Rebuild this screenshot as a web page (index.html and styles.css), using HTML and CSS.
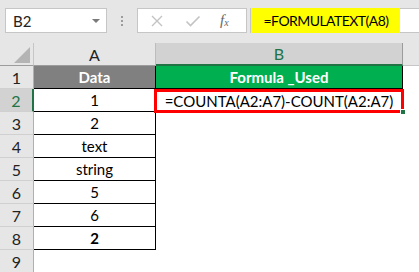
FILE: index.html
```html
<!DOCTYPE html>
<html>
<head>
<meta charset="utf-8">
<link rel="stylesheet" href="styles.css">
</head>
<body>
<div class="toolbar">
  <div class="namebox">
    <span class="name">B2</span>
    <svg class="dd" width="8" height="5" viewBox="0 0 8 5"><path d="M0 0H8L4 4Z" fill="#7a7a7a"/></svg>
  </div>
  <div class="dots"><i></i><i></i><i></i></div>
  <div class="fxbox">
    <svg class="ico" width="14" height="14" viewBox="0 0 14 14"><path d="M2 2L12 12M12 2L2 12" stroke="#c3c3c3" stroke-width="1.4" fill="none"/></svg>
    <svg class="ico" width="16" height="14" viewBox="0 0 16 14"><path d="M1.5 7.5L5.5 11.5L14.5 2.5" stroke="#c3c3c3" stroke-width="1.6" fill="none"/></svg>
    <span class="fx">f<sub>x</sub></span>
  </div>
  <div class="input"><span class="hl">=FORMULATEXT(A8)</span></div>
</div>
<div class="grid">
  <div class="corner"><svg width="16" height="16" viewBox="0 0 16 16"><path d="M16 0V16H0Z" fill="#b4b4b4"/></svg></div>
  <div class="ch">A</div>
  <div class="ch sel">B</div>
  <div class="ch rest"></div>

  <div class="rh">1</div>
  <div class="c a head-gray">Data</div>
  <div class="c b head-green">Formula _Used</div>
  <div class="c rest"></div>

  <div class="rh rsel">2</div>
  <div class="c a">1</div>
  <div class="c b active"><span>=COUNTA(A2:A7)-COUNT(A2:A7)</span><i class="sel-box"></i><i class="handle"></i></div>
  <div class="c rest"></div>

  <div class="rh">3</div>
  <div class="c a">2</div>
  <div class="c e"></div>
  <div class="c rest"></div>

  <div class="rh">4</div>
  <div class="c a">text</div>
  <div class="c e"></div>
  <div class="c rest"></div>

  <div class="rh">5</div>
  <div class="c a">string</div>
  <div class="c e"></div>
  <div class="c rest"></div>

  <div class="rh">6</div>
  <div class="c a">5</div>
  <div class="c e"></div>
  <div class="c rest"></div>

  <div class="rh">7</div>
  <div class="c a">6</div>
  <div class="c e"></div>
  <div class="c rest"></div>

  <div class="rh">8</div>
  <div class="c a bold">2</div>
  <div class="c e"></div>
  <div class="c rest"></div>

  <div class="rh">9</div>
  <div class="c e"></div>
  <div class="c e"></div>
  <div class="c rest"></div>
</div>
</body>
</html>
```
FILE: styles.css
```css
html, body {
  margin: 0;
  padding: 0;
  background: #ffffff;
  overflow: hidden;
}
body {
  width: 419px;
  height: 272px;
  font-family: Lato, "Open Sans", "Liberation Sans", sans-serif;
  color: #000;
}
.toolbar {
  height: 43px;
  background: #e6e6e6;
  display: flex;
  align-items: flex-start;
  padding-top: 8px;
  box-sizing: border-box;
}
.namebox {
  margin-left: 5px;
  width: 102px;
  height: 25px;
  box-sizing: border-box;
  background: #fff;
  border: 1px solid #c6c6c6;
  display: flex;
  align-items: center;
  justify-content: space-between;
  padding: 0 6px 0 7px;
  font-size: 15px;
  color: #222;
}
.dd { margin-top: 1px; }
.dots {
  width: 30px;
  height: 25px;
  display: flex;
  flex-direction: column;
  align-items: center;
  justify-content: center;
  gap: 2px;
}
.dots i {
  display: block;
  width: 2px;
  height: 2px;
  background: #9c9c9c;
}
.fxbox {
  width: 110px;
  height: 25px;
  box-sizing: border-box;
  background: #fff;
  border: 1px solid #c6c6c6;
  display: flex;
  align-items: center;
  padding-left: 12px;
  gap: 21px;
}
.fx {
  font-family: "Liberation Serif", serif;
  font-style: italic;
  font-size: 15px;
  color: #666;
  margin-left: -2px;
}
.fx sub { font-size: 10px; vertical-align: -1px; }
.input {
  margin-left: 3px;
  flex: 1;
  height: 25px;
  box-sizing: border-box;
  background: #fff;
  border: 1px solid #c6c6c6;
  border-right: none;
  display: flex;
}
.hl {
  background: #ffff00;
  width: 149px;
  margin-top: -1px;
  height: 25px;
  display: flex;
  align-items: center;
  justify-content: center;
  font-size: 14px;
  letter-spacing: -0.55px;
  padding-left: 1px;
  box-sizing: border-box;
}
.grid {
  display: grid;
  grid-template-columns: 34px 122px 247px 1fr;
  grid-template-rows: 23px repeat(9, 23px);
  font-size: 15px;
}
.corner {
  background: #e6e6e6;
  border-right: 1px solid #c6c6c6;
  border-bottom: 1px solid #9c9c9c;
  box-sizing: border-box;
  display: flex;
  align-items: flex-end;
  justify-content: flex-end;
  padding: 0 3px 2px 0;
}
.ch {
  background: #e6e6e6;
  box-sizing: border-box;
  border-right: 1px solid #bdbdbd;
  border-bottom: 1px solid #9c9c9c;
  display: flex;
  align-items: center;
  justify-content: center;
  font-size: 16px;
  color: #222;
}
.ch.sel {
  background: #d2d2d2;
  color: #217346;
  border-bottom: 2px solid #217346;
  border-right: 1px solid #9c9c9c;
}
.ch.rest { border-right: none; border-bottom: 1px solid #c6c6c6; }
.rh {
  background: #e6e6e6;
  box-sizing: border-box;
  border-right: 1px solid #b0b0b0;
  border-bottom: 1px solid #d0d0d0;
  display: flex;
  align-items: center;
  justify-content: center;
  color: #222;
  font-size: 16px;
}
.rh.rsel {
  background: #d2d2d2;
  color: #217346;
  border-right: 2px solid #217346;
}
.c {
  box-sizing: border-box;
  display: flex;
  align-items: center;
  justify-content: center;
  white-space: nowrap;
}
.c.a {
  border-right: 1px solid #000;
  border-bottom: 1px solid #000;
}
.c.bold { font-weight: 700; }
.head-gray {
  background: #808080;
  color: #fff;
  font-weight: 700;
}
.head-green {
  background: #00b050;
  color: #fff;
  font-weight: 700;
  border-right: 1px solid #000;
  border-bottom: 1px solid #000;
}
.active {
  position: relative;
  border-right: 1px solid #000;
}
.sel-box {
  position: absolute;
  left: -2px;
  top: 0;
  right: -2px;
  bottom: -1px;
  border: 3px solid #ff0000;
}
.handle {
  position: absolute;
  right: -4px;
  bottom: -3px;
  width: 4px;
  height: 4px;
  background: #217346;
  border: 1px solid #fff;
}
```
